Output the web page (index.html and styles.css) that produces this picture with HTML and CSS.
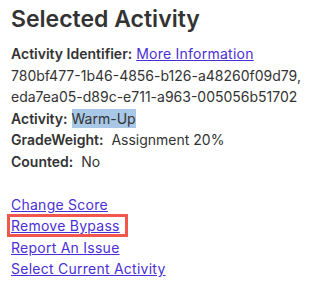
FILE: index.html
```html
<!DOCTYPE html>
<html>
<head>
<meta charset="utf-8">
<link rel="stylesheet" href="styles.css">
</head>
<body>
<div class="panel">
  <h1 class="title">Selected Activity</h1>
  <div class="details">
    <div class="row"><span class="label">Activity Identifier:</span> <a href="#" class="link">More Information</a></div>
    <div class="row">780bf477-1b46-4856-b126-a48260f09d79,</div>
    <div class="row">eda7ea05-d89c-e711-a963-005056b51702</div>
    <div class="row"><span class="label">Activity:</span> <span class="hl">Warm-Up</span></div>
    <div class="row"><span class="label">GradeWeight:</span>&nbsp; Assignment 20%</div>
    <div class="row"><span class="label">Counted:</span>&nbsp; No</div>
  </div>
  <div class="actions">
    <div class="row"><a href="#" class="link">Change Score</a></div>
    <div class="row"><a href="#" class="link boxed">Remove Bypass</a></div>
    <div class="row"><a href="#" class="link">Report An Issue</a></div>
    <div class="row"><a href="#" class="link">Select Current Activity</a></div>
  </div>
</div>
</body>
</html>
```
FILE: styles.css
```css
html, body {
  margin: 0;
  padding: 0;
  background: #ffffff;
}
body {
  font-family: Inter, "Noto Sans", sans-serif;
  color: #333333;
}
.panel {
  padding: 5px 11px 0 11px;
}
.title {
  margin: 0;
  font-size: 23px;
  font-weight: 600;
  line-height: 28px;
  color: #333333;
}
.details {
  margin-top: 10px;
  font-size: 14px;
  line-height: 21.6px;
}
.label {
  font-weight: 600;
}
.hl {
  background: #a9c7e6;
  padding: 1px 0;
}
.link {
  color: #4b2fd6;
  text-decoration: underline;
  letter-spacing: 0.25px;
}
.actions {
  margin-top: 21px;
  font-size: 14px;
  line-height: 21.6px;
}
.boxed {
  outline: 3px solid #f2574d;
  outline-offset: 0;
  padding: 0 5px 0 1px;
  margin-left: -1px;
}
```
